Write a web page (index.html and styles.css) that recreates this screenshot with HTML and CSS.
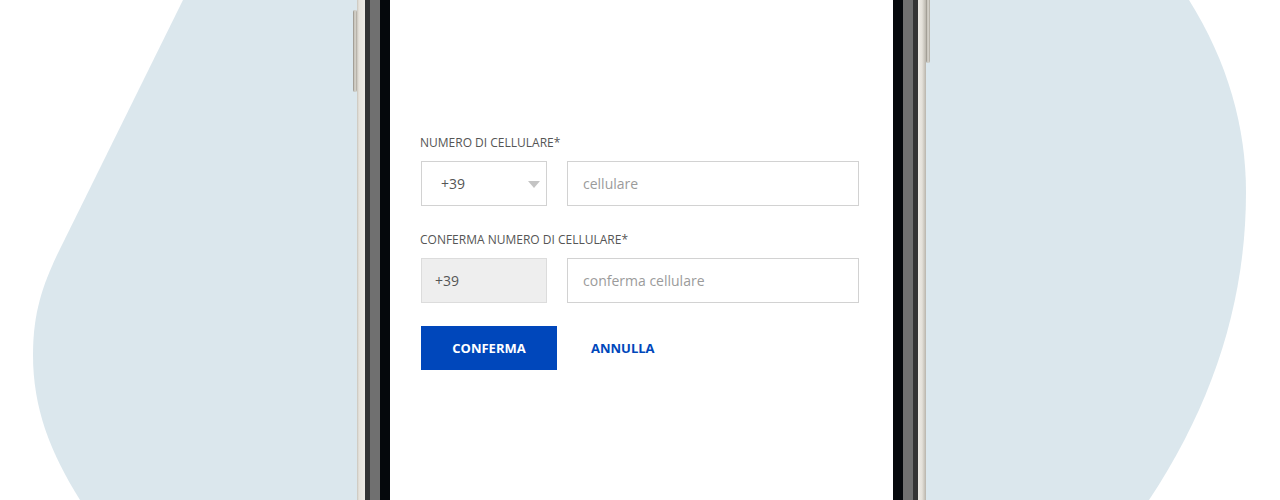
FILE: index.html
```html
<!DOCTYPE html>
<html lang="it">
<head>
    <meta charset="UTF-8">
    <meta name="viewport" content="width=device-width, initial-scale=1.0">
    <title>Conferma numero di cellulare</title>
    <link rel="stylesheet" href="styles.css">
</head>
<body>

<div class="stage">
    <svg class="blob" width="1280" height="500" viewBox="0 0 1280 500" aria-hidden="true">
        <path d="M183,0 L1189,0 C1228,62 1246,128 1246,192 C1246,300 1214,402 1149,500 L80,500 C50,452 33,408 33,355 C33,312 43,285 57,255 Z" fill="#dbe7ed"/>
    </svg>

    <div class="phone">
        <span class="side-button left"></span>
        <span class="side-button right"></span>
        <div class="bezel">
            <div class="bezel-inner">
                <div class="glass">
                    <div class="screen">

                        <form class="phone-form" onsubmit="return false;">
                            <label class="field-label" for="cellulare">Numero di cellulare*</label>
                            <div class="field-row">
                                <div class="prefix-select">
                                    <select id="prefisso">
                                        <option>+39</option>
                                        <option>+41</option>
                                        <option>+33</option>
                                    </select>
                                    <svg class="caret" width="12" height="7" viewBox="0 0 12 7" aria-hidden="true">
                                        <path d="M0,0 L12,0 L6,7 Z" fill="#c4c4c4"/>
                                    </svg>
                                </div>
                                <input type="tel" id="cellulare" class="text-input" placeholder="cellulare">
                            </div>

                            <label class="field-label" for="conferma-cellulare">Conferma numero di cellulare*</label>
                            <div class="field-row last">
                                <input type="text" class="prefix-readonly" value="+39" readonly>
                                <input type="tel" id="conferma-cellulare" class="text-input" placeholder="conferma cellulare">
                            </div>

                            <div class="actions">
                                <button type="submit" class="btn-primary">Conferma</button>
                                <button type="button" class="btn-link">Annulla</button>
                            </div>
                        </form>

                    </div>
                </div>
            </div>
        </div>
    </div>
</div>

</body>
</html>
```

FILE: styles.css
```css
body {
    margin: 0;
    background: #fff;
    font-family: "Open Sans", "Noto Sans", sans-serif;
    overflow: hidden;
}
.stage {
    position: relative;
    height: 500px;
    display: flex;
    justify-content: center;
    overflow: hidden;
}
.blob {
    position: absolute;
    top: 0;
    left: 0;
}

/* phone frame, layered from the outside in */
.phone {
    position: relative;
    width: 569px;
    height: 500px;
    margin-left: 3px;
    padding: 0 8px;
    box-sizing: border-box;
    background: linear-gradient(to right,
        #c9c5bc 0, #e6e3dc 2px, #eeebe5 8px,
        transparent 8px, transparent calc(100% - 8px),
        #eeebe5 calc(100% - 8px), #e4e1da calc(100% - 4px), #b9b5ac 100%);
}
.side-button {
    position: absolute;
    width: 4px;
    border-radius: 2px;
    background: linear-gradient(to right, #8f8b82, #dedbd3 50%, #aaa69d);
}
.side-button.left {
    left: -4px;
    top: 10px;
    height: 82px;
}
.side-button.right {
    right: -4px;
    top: -20px;
    height: 83px;
}
.bezel {
    height: 100%;
    padding: 0 5px;
    background: #343434;
}
.bezel-inner {
    height: 100%;
    padding: 0 10px;
    background: #707070;
}
.glass {
    height: 100%;
    padding: 0 10px;
    background: #05080c;
}
.screen {
    height: 100%;
    background: #fff;
    padding: 135px 34px 0 30px;
    box-sizing: border-box;
}

/* form */
.phone-form {
    display: flex;
    flex-direction: column;
}
.field-label {
    display: block;
    font-size: 12px;
    line-height: 16px;
    color: #555;
    text-transform: uppercase;
    margin-bottom: 10px;
}
.field-row {
    display: flex;
    gap: 20px;
    margin-left: 1px;
    margin-bottom: 26px;
}
.field-row.last {
    margin-bottom: 23px;
}
.prefix-select {
    position: relative;
    width: 126px;
    flex: none;
}
.prefix-select select {
    appearance: none;
    -webkit-appearance: none;
    width: 100%;
    height: 45px;
    margin: 0;
    padding: 0 0 0 19px;
    border: 1px solid #d2d2d2;
    border-radius: 0;
    background: #fff;
    font-family: inherit;
    font-size: 14px;
    color: #555;
}
.prefix-select .caret {
    position: absolute;
    right: 7px;
    top: 20px;
    pointer-events: none;
}
.text-input,
.prefix-readonly {
    height: 45px;
    margin: 0;
    box-sizing: border-box;
    border: 1px solid #d2d2d2;
    border-radius: 0;
    font-family: inherit;
    font-size: 14px;
    color: #555;
    outline: none;
}
.text-input {
    flex: 1;
    min-width: 0;
    padding: 0 15px;
    background: #fff;
}
.text-input::placeholder {
    color: #9b9b9b;
}
.prefix-readonly {
    width: 126px;
    flex: none;
    padding: 0 13px;
    background: #eee;
    border-color: #dcdcdc;
}
.actions {
    display: flex;
    align-items: center;
    gap: 34px;
    margin-left: 1px;
}
.btn-primary {
    width: 136px;
    height: 44px;
    border: none;
    border-radius: 0;
    background: #0047bb;
    color: #fff;
    font-family: inherit;
    font-size: 13px;
    font-weight: 700;
    text-transform: uppercase;
    cursor: pointer;
}
.btn-link {
    border: none;
    background: none;
    padding: 0;
    color: #0047bb;
    font-family: inherit;
    font-size: 13px;
    font-weight: 700;
    text-transform: uppercase;
    cursor: pointer;
}
```
